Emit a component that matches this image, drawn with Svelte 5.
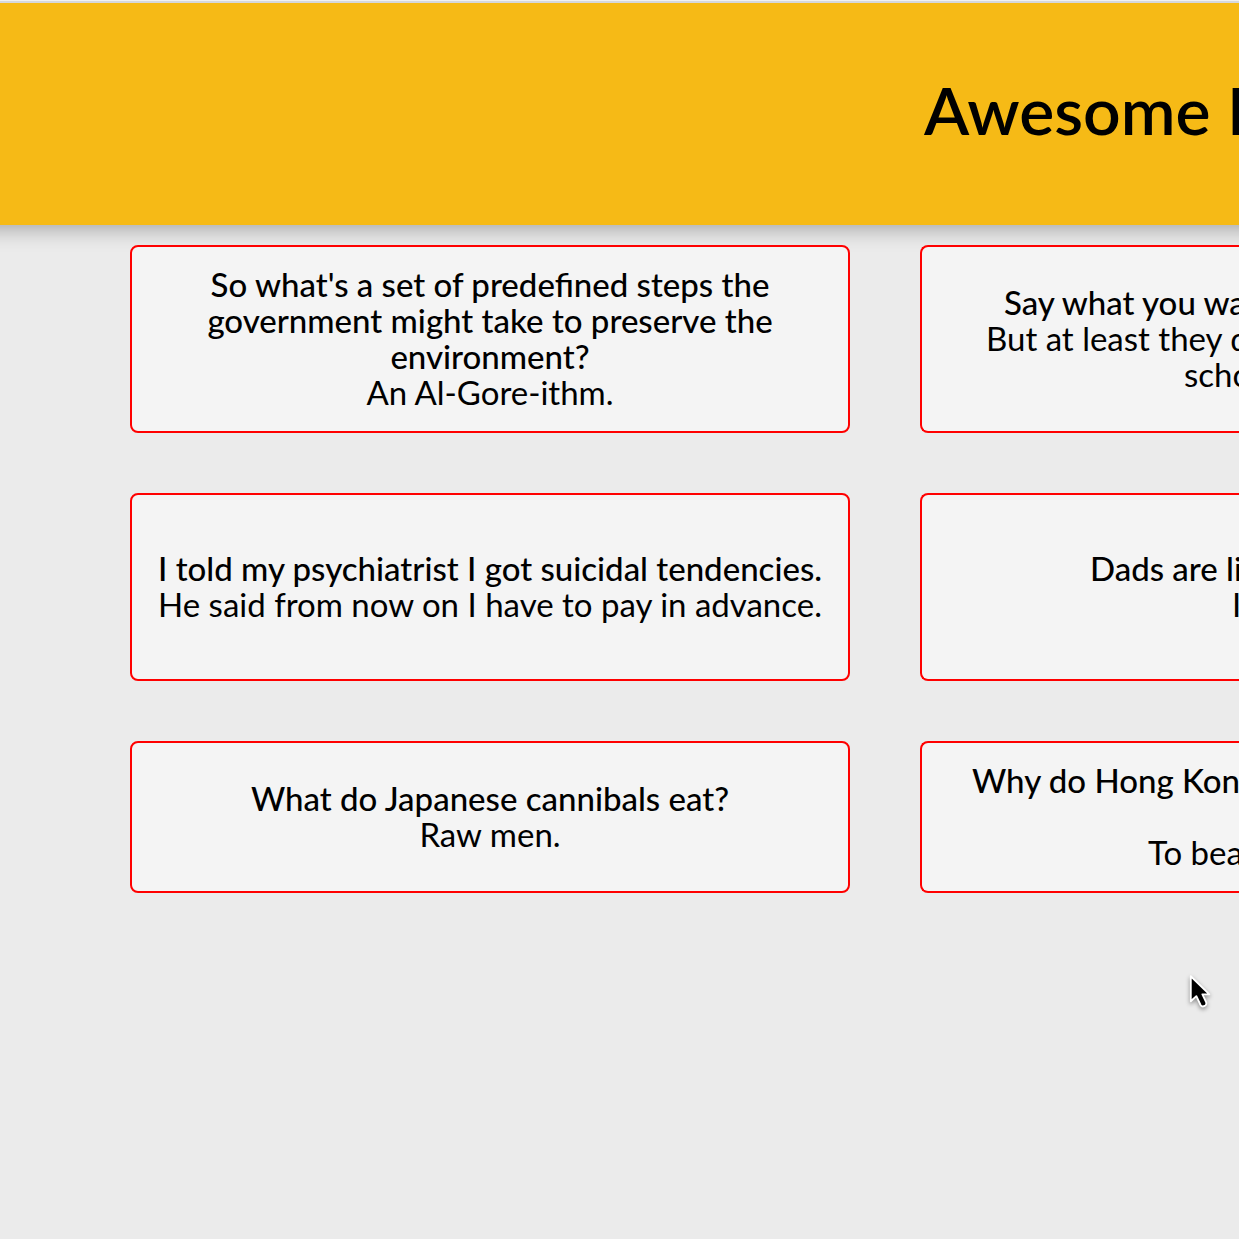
<script>
  // `indent` is the start of a line inside a card that runs past the window edge.
  const cards = [
    {
      setup: [{ text: "So what's a set of predefined steps the government might take to preserve the environment?" }],
      punchline: [{ text: 'An Al-Gore-ithm.' }]
    },
    {
      open: true,
      setup: [{ text: 'Say what you wa', indent: 82 }],
      punchline: [{ text: 'But at least they d', indent: 64 }, { text: 'scho', indent: 262 }]
    },
    {
      setup: [{ text: 'I told my psychiatrist I got suicidal tendencies.' }],
      punchline: [{ text: 'He said from now on I have to pay in advance.' }]
    },
    {
      open: true,
      setup: [{ text: 'Dads are li', indent: 168 }],
      punchline: [{ text: 'I', indent: 310 }]
    },
    {
      setup: [{ text: 'What do Japanese cannibals eat?' }],
      punchline: [{ text: 'Raw men.' }]
    },
    {
      open: true,
      setup: [{ text: 'Why do Hong Kon', indent: 50 }, { text: '\u00a0', indent: 0 }],
      punchline: [{ text: 'To bea', indent: 226 }]
    }
  ];
</script>

<div class="page">
  <div class="topline"></div>
  <header>
    <h1>Awesome P</h1>
  </header>

  <main>
    {#each cards as card}
      <article class="card" class:open={card.open}>
        <h2>
          {#each card.setup as line}
            <span class="line" style:padding-left={line.indent ? `${line.indent}px` : null}>{line.text}</span>
          {/each}
        </h2>
        <p>
          {#each card.punchline as line}
            <span class="line" style:padding-left={line.indent ? `${line.indent}px` : null}>{line.text}</span>
          {/each}
        </p>
      </article>
    {/each}
  </main>

  <svg class="cursor" viewBox="0 0 28 40" aria-hidden="true">
    <path d="M3 3V30L9 24.500L13.500 34Q15 36.500 18 35Q20.500 33.500 19.500 31L15.500 22.500H23Z" fill="#000" stroke="#fff" stroke-width="2" stroke-linejoin="round" />
  </svg>
</div>

<style>
  :global(body) {
    margin: 0;
    background: #ebebeb;
  }

  .page {
    position: relative;
    min-height: 100vh;
    overflow: hidden;
    color: #000;
    font-family: Lato, sans-serif;
    font-size: 33px;
    line-height: 36px;
  }

  .topline {
    position: relative;
    z-index: 1;
    height: 1px;
    background: #f0f1f3;
    border-bottom: 2px solid #d5d8de;
  }

  header {
    display: flex;
    align-items: flex-start;
    box-sizing: border-box;
    min-height: 222px;
    margin: 0 -40px;
    padding: 64px 0 64px 964px;
    background: #f6ba16;
    box-shadow: 0 4px 20px rgba(0, 0, 0, 0.3);
  }

  h1 {
    margin: 0;
    font-size: 66px;
    line-height: 86px;
    font-weight: 600;
    white-space: nowrap;
  }

  main {
    display: grid;
    grid-template-columns: minmax(0, 720px) minmax(0, 1fr);
    grid-template-rows: minmax(188px, auto) minmax(188px, auto) minmax(152px, auto);
    gap: 60px 70px;
    padding: 20px 0 60px 130px;
    position: relative;
  }

  .card {
    display: flex;
    flex-direction: column;
    justify-content: center;
    box-sizing: border-box;
    padding: 19px 0 21px;
    overflow: hidden;
    border: 2px solid #f00;
    border-radius: 8px;
    background: #f4f4f4;
    text-align: center;
  }

  .card.open {
    border-right: 0;
    border-radius: 8px 0 0 8px;
    text-align: left;
    white-space: nowrap;
  }

  h2,
  p {
    margin: 0;
    font-size: inherit;
    font-weight: 400;
  }

  h2 {
    font-weight: 500;
  }

  .line {
    display: block;
  }

  .cursor {
    position: absolute;
    top: 973px;
    left: 1188px;
    width: 26px;
    height: 38px;
    filter: drop-shadow(0 2px 2px rgba(0, 0, 0, 0.4));
  }
</style>
